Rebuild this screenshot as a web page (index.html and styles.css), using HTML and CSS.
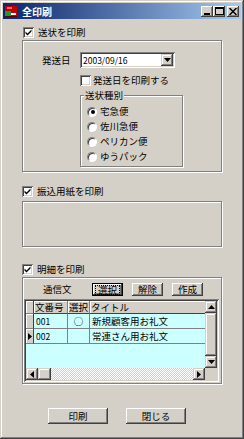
FILE: index.html
```html
<!DOCTYPE html>
<html lang="ja">
<head>
<meta charset="utf-8">
<title>全印刷</title>
<link rel="stylesheet" href="styles.css">
</head>
<body>
<div class="win">
  <div class="titlebar">
    <svg class="appicon" viewBox="0 0 14 14" width="14" height="14">
      <rect x="1" y="2" width="12" height="10" fill="#c00000"/>
      <rect x="1" y="7" width="6" height="5" fill="#1a9a30"/>
      <rect x="3" y="3" width="5" height="2" fill="#ff6060"/>
      <rect x="7" y="9" width="5" height="2" fill="#ffffff"/>
      <rect x="1" y="12" width="12" height="1" fill="#600000"/>
    </svg>
    <span class="title">全印刷</span>
    <div class="tbtns">
      <span class="tbtn"><svg width="8" height="7" viewBox="0 0 8 7"><rect x="1" y="5" width="6" height="2" fill="#000"/></svg></span>
      <span class="tbtn"><svg width="9" height="8" viewBox="0 0 9 8"><rect x="0.5" y="0.5" width="8" height="7" fill="none" stroke="#000"/><rect x="0" y="0" width="9" height="2" fill="#000"/></svg></span>
      <span class="tbtn close"><svg width="8" height="7" viewBox="0 0 8 7"><path d="M0.5 0 L7.5 7 M7.5 0 L0.5 7" stroke="#000" stroke-width="1.5"/></svg></span>
    </div>
  </div>

  <div class="body">
    <div class="cbrow row1"><span class="cb"><svg class="chk" viewBox="0 0 11 11" width="11" height="11"><polygon points="2.5,4.5 4.5,6.5 8.5,2.5 8.5,4.5 4.5,8.5 2.5,6.5" fill="#000"/></svg></span><span>送状を印刷</span></div>
    <div class="group g1">
      <div class="daterow">
        <span class="lbl">発送日</span>
        <div class="combo"><span class="num ctext">2003/09/16</span><span class="ddbtn"><svg width="7" height="4" viewBox="0 0 7 4"><polygon points="0,0 7,0 3.5,4" fill="#000"/></svg></span></div>
      </div>
      <div class="cbrow rowdate"><span class="cb"></span><span>発送日を印刷する</span></div>
      <fieldset class="sub">
        <legend>送状種別</legend>
        <div class="rrow"><span class="rb on"></span><span>宅急便</span></div>
        <div class="rrow"><span class="rb"></span><span>佐川急便</span></div>
        <div class="rrow"><span class="rb"></span><span>ペリカン便</span></div>
        <div class="rrow"><span class="rb"></span><span>ゆうパック</span></div>
      </fieldset>
    </div>

    <div class="cbrow row2"><span class="cb"><svg class="chk" viewBox="0 0 11 11" width="11" height="11"><polygon points="2.5,4.5 4.5,6.5 8.5,2.5 8.5,4.5 4.5,8.5 2.5,6.5" fill="#000"/></svg></span><span>振込用紙を印刷</span></div>
    <div class="group g2"></div>

    <div class="cbrow row3"><span class="cb"><svg class="chk" viewBox="0 0 11 11" width="11" height="11"><polygon points="2.5,4.5 4.5,6.5 8.5,2.5 8.5,4.5 4.5,8.5 2.5,6.5" fill="#000"/></svg></span><span>明細を印刷</span></div>
    <div class="group g3">
      <div class="comrow">
        <span class="lbl2">通信文</span>
        <span class="sbtn def"><span class="focus">選択</span></span>
        <span class="sbtn">解除</span>
        <span class="sbtn">作成</span>
      </div>
      <div class="grid">
        <div class="table">
          <div class="trow thead">
            <span class="ind hc"></span><span class="hc">文番号</span><span class="hc">選択</span><span class="hc last">タイトル</span>
          </div>
          <div class="trow">
            <span class="ind"></span><span class="dc num">001</span><span class="dc ctr">○</span><span class="dc">新規顧客用お礼文</span>
          </div>
          <div class="trow">
            <span class="ind cur"><svg width="4" height="7" viewBox="0 0 4 7"><polygon points="0,0 4,3.5 0,7" fill="#000"/></svg></span><span class="dc num">002</span><span class="dc ctr"></span><span class="dc">常連さん用お礼文</span>
          </div>
        </div>
        <div class="vscroll">
          <span class="sarr"><svg width="7" height="4" viewBox="0 0 7 4"><polygon points="0,4 7,4 3.5,0" fill="#000"/></svg></span>
          <span class="vthumb"></span>
          <span class="sarr"><svg width="7" height="4" viewBox="0 0 7 4"><polygon points="0,0 7,0 3.5,4" fill="#000"/></svg></span>
        </div>
        <div class="hscroll">
          <span class="sarr"><svg width="4" height="7" viewBox="0 0 4 7"><polygon points="4,0 4,7 0,3.5" fill="#000"/></svg></span>
          <span class="hthumb"></span>
          <span class="track"></span>
          <span class="sarr"><svg width="4" height="7" viewBox="0 0 4 7"><polygon points="0,0 4,3.5 0,7" fill="#000"/></svg></span>
        </div>
        <div class="corner"></div>
      </div>
    </div>

    <div class="btns">
      <span class="btn">印刷</span>
      <span class="btn">閉じる</span>
    </div>
  </div>
</div>
</body>
</html>
```

FILE: styles.css
```css
* { box-sizing: border-box; }

body {
  margin: 0;
  background: #d4d0c8;
  font-family: "Noto Sans CJK JP", "Noto Sans", sans-serif;
  font-size: 9.5px;
  line-height: 13px;
  color: #000;
}

.win {
  width: 244px;
  height: 439px;
  padding: 3px;
  background: #d4d0c8;
  box-shadow: inset -1px -1px #404040, inset 1px 1px #d4d0c8,
              inset -2px -2px #808080, inset 2px 2px #ffffff;
  display: flex;
  flex-direction: column;
}

.titlebar {
  height: 16px;
  flex: none;
  background: linear-gradient(90deg, #0a246a, #a6caf0);
  display: flex;
  align-items: center;
  color: #fff;
}
.appicon { margin-left: 1px; flex: none; }
.title { margin-left: 4px; font-size: 10px; font-weight: bold; }
.tbtns { margin-left: auto; margin-right: 2px; display: flex; }
.tbtn {
  width: 12px;
  height: 11px;
  background: #d4d0c8;
  box-shadow: inset -1px -1px #404040, inset 1px 1px #ffffff,
              inset -2px -2px #808080, inset 2px 2px #d4d0c8;
  display: flex;
  align-items: center;
  justify-content: center;
}
.tbtn.close { margin-left: 2px; }

.body {
  padding-left: 19px;
  display: flex;
  flex-direction: column;
}

.cbrow {
  display: flex;
  align-items: center;
  height: 13px;
  gap: 4px;
}
.cb {
  width: 11px;
  height: 11px;
  flex: none;
  background: #fff;
  box-shadow: inset 1px 1px #808080, inset -1px -1px #ffffff,
              inset 2px 2px #404040, inset -2px -2px #d4d0c8;
  display: block;
}
.chk { display: block; }

.row1 { margin-top: 7px; margin-left: 1px; }
.row2 { margin-top: 13px; }
.row3 { margin-top: 16px; }

.group {
  width: 200px;
  border: 1px solid #808080;
  box-shadow: inset 1px 1px #ffffff, 1px 1px #ffffff;
}
.g1 { height: 132px; margin-top: 1px; padding: 11px 0 0 19px; }
.g2 { height: 46px; margin-top: 3px; }
.g3 { height: 107px; margin-top: 1px; padding: 5px 0 0 0; }

.daterow { display: flex; align-items: center; height: 16px; }
.lbl { width: 38px; }
.combo {
  width: 95px;
  height: 16px;
  background: #fff;
  padding: 2px;
  box-shadow: inset 1px 1px #808080, inset -1px -1px #ffffff,
              inset 2px 2px #404040, inset -2px -2px #d4d0c8;
  display: flex;
  align-items: center;
}
.num { font-size: 8.5px; }
.ctext { padding-left: 1px; }
.ddbtn {
  margin-left: auto;
  width: 12px;
  height: 12px;
  background: #d4d0c8;
  box-shadow: inset -1px -1px #404040, inset 1px 1px #d4d0c8,
              inset -2px -2px #808080, inset 2px 2px #ffffff;
  display: flex;
  align-items: center;
  justify-content: center;
}
.ddbtn svg, .sarr svg { display: block; }

.rowdate { margin-top: 6px; margin-left: 38px; gap: 2px; }

.sub {
  margin: 2px 0 0 38px;
  width: 103px;
  padding: 3px 0 2px 3px;
  border: 1px solid #808080;
  box-shadow: inset 1px 1px #ffffff, 1px 1px #ffffff;
}
.sub legend {
  padding: 0 1px;
  line-height: 12px;
  background: #d4d0c8;
}
.rrow {
  display: flex;
  align-items: center;
  height: 15px;
  gap: 3px;
  padding-left: 3px;
}
.rb {
  width: 10px;
  height: 10px;
  flex: none;
  border-radius: 50%;
  background: #fff;
  border: 1px solid;
  border-color: #808080 #ffffff #ffffff #808080;
  box-shadow: inset 1px 1px #404040;
  display: flex;
  align-items: center;
  justify-content: center;
}
.rb.on::after {
  content: "";
  width: 4px;
  height: 4px;
  border-radius: 50%;
  background: #000;
  margin: 1px 0 0 1px;
}

.comrow { display: flex; align-items: center; height: 13px; padding-left: 20px; }
.lbl2 { width: 49px; }
.sbtn {
  width: 31px;
  height: 13px;
  margin-right: 9px;
  background: #d4d0c8;
  box-shadow: inset -1px -1px #404040, inset 1px 1px #ffffff,
              inset -2px -2px #808080, inset 2px 2px #d4d0c8;
  display: flex;
  align-items: center;
  justify-content: center;
  line-height: 11px;
}
.sbtn.def {
  border: 1px solid #000;
  box-shadow: inset -1px -1px #404040, inset 1px 1px #ffffff,
              inset -2px -2px #808080;
}
.focus {
  outline: 1px dotted #000;
  outline-offset: 0;
  padding: 0 2px;
  line-height: 8px;
  height: 8px;
  display: flex;
  align-items: center;
}

.grid {
  margin: 3px 0 0 1px;
  width: 195px;
  height: 83px;
  padding: 2px;
  box-shadow: inset 1px 1px #808080, inset -1px -1px #ffffff,
              inset 2px 2px #404040, inset -2px -2px #d4d0c8;
  display: grid;
  grid-template-columns: 1fr 12px;
  grid-template-rows: 1fr 12px;
}
.table { background: #ccffff; overflow: hidden; }
.trow {
  display: grid;
  grid-template-columns: 8px 34px 22px 1fr;
  height: 15px;
}
.trow.thead { height: 13px; }
.trow > span {
  display: flex;
  align-items: center;
  white-space: nowrap;
  overflow: hidden;
}
.hc {
  background: #d4d0c8;
  border-right: 1px solid #808080;
  border-bottom: 1px solid #404040;
  box-shadow: inset 1px 1px #ffffff;
  padding-left: 1px;
}
.hc.last { border-right: none; }
.ind {
  background: #d4d0c8;
  border-right: 1px solid #404040;
  border-bottom: 1px solid #808080;
  box-shadow: inset 1px 1px #ffffff;
  justify-content: center;
}
.ind.cur { padding-left: 1px; }
.dc {
  border-right: 1px solid #808080;
  border-bottom: 1px solid #808080;
  padding-left: 2px;
}
.dc:last-child { border-right: none; }
.dc.ctr { justify-content: center; padding-left: 0; }

.vscroll { display: flex; flex-direction: column; }
.hscroll { display: flex; }
.sarr, .vthumb, .hthumb, .corner {
  background: #d4d0c8;
  box-shadow: inset -1px -1px #404040, inset 1px 1px #d4d0c8,
              inset -2px -2px #808080, inset 2px 2px #ffffff;
}
.sarr {
  width: 12px;
  height: 12px;
  flex: none;
  display: flex;
  align-items: center;
  justify-content: center;
}
.vthumb { flex: 1; }
.hthumb { width: 13px; flex: none; }
.track {
  flex: 1;
  background: repeating-conic-gradient(#ffffff 0 25%, #d4d0c8 0 50%) 0 0 / 2px 2px;
}
.corner { box-shadow: none; }

.btns {
  display: flex;
  gap: 18px;
  margin: 24px 0 0 26px;
}
.btn {
  width: 60px;
  height: 16px;
  background: #d4d0c8;
  box-shadow: inset -1px -1px #404040, inset 1px 1px #ffffff,
              inset -2px -2px #808080, inset 2px 2px #d4d0c8;
  display: flex;
  align-items: center;
  justify-content: center;
}
```
